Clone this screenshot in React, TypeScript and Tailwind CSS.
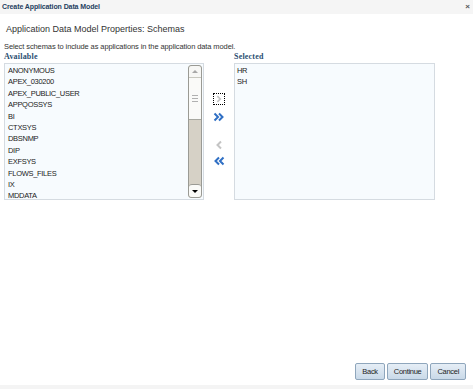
const available = [
  'ANONYMOUS',
  'APEX_030200',
  'APEX_PUBLIC_USER',
  'APPQOSSYS',
  'BI',
  'CTXSYS',
  'DBSNMP',
  'DIP',
  'EXFSYS',
  'FLOWS_FILES',
  'IX',
  'MDDATA',
];

const selected = ['HR', 'SH'];

function Chevron({ dir, double, color }: { dir: 'right' | 'left'; double?: boolean; color: string }) {
  const flip = dir === 'left' ? 'scale(-1,1) translate(-12,0)' : undefined;
  return (
    <svg width="12" height="10" viewBox="0 0 12 10">
      <g transform={flip} fill="none" stroke={color} strokeWidth="2" strokeLinejoin="miter">
        {double ? (
          <>
            <path d="M1.5 1.5 L5 5 L1.5 8.5" />
            <path d="M6 1.5 L9.5 5 L6 8.5" />
          </>
        ) : (
          <path d="M4 1.5 L7.5 5 L4 8.5" />
        )}
      </g>
    </svg>
  );
}

function Scrollbar() {
  return (
    <div className="flex w-[14px] flex-col rounded-[3px] border border-[#9a9a94] bg-[#d6d1c6]">
      <div className="flex h-[12px] items-center justify-center rounded-t-[3px] border-b border-[#c8c8c0] bg-[#f7f7f5]">
        <div className="h-0 w-0 border-x-[3px] border-b-[3px] border-x-transparent border-b-[#a8a8a8]" />
      </div>
      <div className="flex h-[42px] flex-col items-center justify-center gap-[2px] border-b border-[#a8a8a0] bg-[#fafaf8]">
        <div className="h-px w-[6px] bg-[#b0b0b0]" />
        <div className="h-px w-[6px] bg-[#b0b0b0]" />
        <div className="h-px w-[6px] bg-[#b0b0b0]" />
      </div>
      <div className="flex-1" />
      <div className="flex h-[13px] items-center justify-center rounded-[3px] border-t border-[#9a9a94] bg-[#fafaf8]">
        <div className="h-0 w-0 border-x-[3px] border-t-[3px] border-x-transparent border-t-black" />
      </div>
    </div>
  );
}

export default function App() {
  return (
    <div className="flex h-[389px] w-[473px] flex-col bg-white font-['Liberation_Sans',Arial,sans-serif] text-[#222]">
      <div className="flex h-[14px] items-center justify-between bg-[#f5f5f5] pl-[2px] pr-[3px]">
        <span className="text-[7px] font-bold tracking-[-0.1px] text-[#1f3f5f]">Create Application Data Model</span>
        <span className="text-[8px] font-bold leading-none text-[#555]">×</span>
      </div>

      <div className="flex-1 px-[4px]">
        <h1 className="mt-[9px] pl-[2px] text-[9px] leading-[12px] text-[#333]">
          Application Data Model Properties: Schemas
        </h1>
        <p className="mt-[7px] text-[7.5px] leading-[9px] tracking-[-0.1px] text-[#333]">
          Select schemas to include as applications in the application data model.
        </p>

        <div className="mt-[1px] flex">
          <div className="flex w-[200px] flex-col">
            <span className="font-['Liberation_Serif',serif] text-[8px] font-bold leading-[10px] tracking-[0.2px] text-[#2b4e72]">
              Available
            </span>
            <div className="mt-[1px] flex h-[137px] border border-[#d5dbe1] bg-[#f7fbfe] pr-px">
              <ul className="flex-1 pl-[3px] pt-[1px]">
                {available.map((name) => (
                  <li key={name} className="h-[11.4px] text-[7.5px] leading-[11.4px] tracking-[-0.3px] text-[#222]">
                    {name}
                  </li>
                ))}
              </ul>
              <div className="flex py-px">
                <Scrollbar />
              </div>
            </div>
          </div>

          <div className="flex w-[30px] flex-col items-center pt-[41px]">
            <div className="flex h-[12px] w-[12px] items-center justify-center border border-dotted border-black">
              <Chevron dir="right" color="#c4c4c4" />
            </div>
            <div className="mt-[6px] flex h-[12px] items-center justify-center">
              <Chevron dir="right" double color="#2f6fc4" />
            </div>
            <div className="mt-[16px] flex h-[12px] items-center justify-center">
              <Chevron dir="left" color="#c4c4c4" />
            </div>
            <div className="mt-[4px] flex h-[12px] items-center justify-center">
              <Chevron dir="left" double color="#2f6fc4" />
            </div>
          </div>

          <div className="flex w-[201px] flex-col">
            <span className="font-['Liberation_Serif',serif] text-[8px] font-bold leading-[10px] tracking-[0.2px] text-[#2b4e72]">
              Selected
            </span>
            <ul className="mt-[1px] h-[137px] border border-[#d5dbe1] bg-[#f7fbfe] pl-[2px] pt-[1px]">
              {selected.map((name) => (
                <li key={name} className="h-[11.4px] text-[7.5px] leading-[11.4px] tracking-[-0.3px] text-[#222]">
                  {name}
                </li>
              ))}
            </ul>
          </div>
        </div>
      </div>

      <div className="flex justify-end gap-[2px] pb-[5px] pr-[7px]">
        {['Back', 'Continue', 'Cancel'].map((label) => (
          <button
            key={label}
            className="h-[17px] rounded-[2px] border border-[#8fa6bc] bg-gradient-to-b from-[#e6eef6] to-[#c9d9e8] px-[6px] text-[7.5px] tracking-[-0.3px] text-[#222]"
          >
            {label}
          </button>
        ))}
      </div>
      <div className="h-[4px] bg-[#f4f4f4]" />
    </div>
  );
}
